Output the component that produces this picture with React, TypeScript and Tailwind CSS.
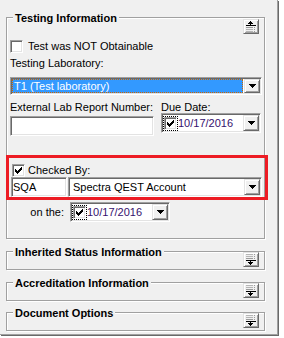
import React from "react";

const sunken =
  "border border-t-[#a0a0a0] border-l-[#a0a0a0] border-r-white border-b-white shadow-[inset_1px_1px_0_#696969,inset_-1px_-1px_0_#e3e3e3]";
const raised =
  "border border-t-[#e3e3e3] border-l-[#e3e3e3] border-r-[#696969] border-b-[#696969] shadow-[inset_1px_1px_0_#fff,inset_-1px_-1px_0_#a0a0a0] bg-[#f0f0f0]";
const etched = "border border-[#a0a0a0] shadow-[inset_1px_1px_0_#fff,1px_1px_0_#fff]";

function Checkbox({ checked = false, focus = false }: { checked?: boolean; focus?: boolean }) {
  return (
    <span
      className={`flex h-[13px] w-[13px] shrink-0 items-center justify-center bg-white ${sunken} ${
        focus ? "outline-1 outline-offset-0 outline-dotted outline-black" : ""
      }`}
    >
      {checked && (
        <svg width="7" height="7" viewBox="0 0 7 7" shapeRendering="crispEdges">
          <path d="M6 0h1v3h-1v1h-1v1h-1v1h-1v1h-1v-1h-1v-1h-1v-3h1v1h1v1h1v-1h1v-1h1z" fill="#000" />
        </svg>
      )}
    </span>
  );
}

function DropButton({ className = "" }: { className?: string }) {
  return (
    <span className={`flex w-[16px] shrink-0 items-center justify-center self-stretch ${raised} ${className}`}>
      <svg width="7" height="4" viewBox="0 0 7 4" shapeRendering="crispEdges">
        <path d="M0 0h7v1h-1v1h-1v1h-1v1h-1v-1h-1v-1h-1v-1h-1z" fill="#000" />
      </svg>
    </span>
  );
}

function Combo({ text, selected = false, className = "" }: { text: string; selected?: boolean; className?: string }) {
  return (
    <div className={`flex h-[18px] bg-white p-[1px] ${sunken} ${className}`}>
      {selected ? (
        <div className="mr-[1px] flex flex-1 items-center border border-dotted border-[#cc6600] bg-[#3399ff] pl-[1px] leading-[12px] text-white">
          {text}
        </div>
      ) : (
        <div className="flex flex-1 items-center pl-[3px] leading-[14px]">{text}</div>
      )}
      <DropButton />
    </div>
  );
}

function DatePicker({ className = "" }: { className?: string }) {
  return (
    <div className={`flex h-[20px] w-[100px] items-center bg-white p-[1px] ${sunken} ${className}`}>
      <span className="ml-[1px]">
        <Checkbox checked focus />
      </span>
      <span className="ml-[1px] leading-[14px] text-[#35106e]">10/17/2016</span>
      <DropButton className="ml-auto" />
    </div>
  );
}

function CollapseButton({ up = false }: { up?: boolean }) {
  return (
    <span className={`flex h-[15px] w-[16px] items-center justify-center ${raised}`}>
      {up ? (
        <svg width="12" height="11" viewBox="0 0 12 11" shapeRendering="crispEdges">
          <rect x="5" y="0" width="1" height="1" fill="#000" />
          <rect x="4" y="1" width="3" height="1" fill="#000" />
          <rect x="3" y="2" width="5" height="1" fill="#000" />
          <rect x="5" y="3" width="1" height="1" fill="#000" />
          <rect x="1" y="4" width="10" height="1" fill="#000" />
          <rect x="1" y="6" width="7" height="1" fill="#9a9a9a" />
          <path d="M9 6h1v1h-1zM9 8h1v1h-1zM9 10h1v1h-1z" fill="#9a9a9a" />
          <rect x="1" y="8" width="7" height="1" fill="#b5b5b5" />
          <rect x="1" y="10" width="7" height="1" fill="#b5b5b5" />
        </svg>
      ) : (
        <svg width="12" height="11" viewBox="0 0 12 11" shapeRendering="crispEdges">
          <rect x="1" y="0" width="7" height="1" fill="#b5b5b5" />
          <rect x="1" y="2" width="7" height="1" fill="#b5b5b5" />
          <rect x="1" y="4" width="7" height="1" fill="#9a9a9a" />
          <path d="M9 0h1v1h-1zM9 2h1v1h-1zM9 4h1v1h-1z" fill="#9a9a9a" />
          <rect x="1" y="6" width="10" height="1" fill="#000" />
          <rect x="5" y="7" width="1" height="1" fill="#000" />
          <rect x="3" y="8" width="5" height="1" fill="#000" />
          <rect x="4" y="9" width="3" height="1" fill="#000" />
          <rect x="5" y="10" width="1" height="1" fill="#000" />
        </svg>
      )}
    </span>
  );
}

function Title({ children }: { children: React.ReactNode }) {
  return (
    <span className="absolute left-[6px] top-[-6px] bg-[#f0f0f0] px-[2px] font-bold leading-[13px]">{children}</span>
  );
}

function CollapsedGroup({ title, className = "" }: { title: string; className?: string }) {
  return (
    <div className={`relative h-[19px] w-[259px] ${etched} ${className}`}>
      <Title>{title}</Title>
      <div className="flex justify-end pr-[5px]">
        <CollapseButton />
      </div>
    </div>
  );
}

export default function App() {
  return (
    <div className="h-[338px] w-[284px] bg-white font-['Liberation_Sans',Arial,sans-serif] text-[11px] text-black">
      <div className="w-[278px] border-b border-r border-b-[#a0a0a0] border-r-[#a0a0a0] bg-[#f0f0f0] pb-[3px] pl-[6px] pt-[17px] shadow-[1px_1px_0_#696969]">
        {/* Testing Information */}
        <div className={`relative h-[222px] w-[259px] ${etched}`}>
          <Title>Testing Information</Title>
          <div className="flex flex-col pl-[3px]">
            <div className="mt-[1px] flex justify-end pr-[5px]">
              <CollapseButton up />
            </div>
            <div className="mt-[6px] flex h-[13px] items-center">
              <Checkbox />
              <span className="ml-[5px] leading-[13px]">Test was NOT Obtainable</span>
            </div>
            <div className="mt-[4px] leading-[13px]">Testing Laboratory:</div>
            <Combo text="T1 (Test laboratory)" selected className="mt-[7px] w-[252px]" />
            <div className="mt-[6px] flex">
              <div className="flex flex-col">
                <span className="leading-[13px]">External Lab Report Number:</span>
                <div className={`mt-[2px] h-[20px] w-[144px] bg-white ${sunken}`} />
              </div>
              <div className="ml-[7px] flex flex-col">
                <span className="h-[12px] leading-[13px]">Due Date:</span>
                <DatePicker />
              </div>
            </div>
            <div className="mt-[28px] flex h-[13px] items-center pl-[2px]">
              <Checkbox checked />
              <span className="ml-[3px] leading-[13px]">Checked By:</span>
            </div>
            <div className="flex pl-[1px]">
              <div className={`flex h-[20px] w-[56px] items-center bg-white pl-[1px] ${sunken}`}>SQA</div>
              <Combo text="Spectra QEST Account" className="ml-[1px] h-[20px] w-[194px]" />
            </div>
            <div className="mt-[5px] flex items-center">
              <span className="w-[54px] text-right leading-[13px]">on the:</span>
              <DatePicker className="ml-[6px]" />
            </div>
          </div>
          <div className="pointer-events-none absolute left-[-1px] top-[137px] h-[45px] w-[262px] border-[3px] border-[#ed1c24]" />
        </div>

        <CollapsedGroup title="Inherited Status Information" className="mt-[12px]" />
        <CollapsedGroup title="Accreditation Information" className="mt-[12px]" />
        <CollapsedGroup title="Document Options" className="mt-[11px]" />
      </div>
    </div>
  );
}
